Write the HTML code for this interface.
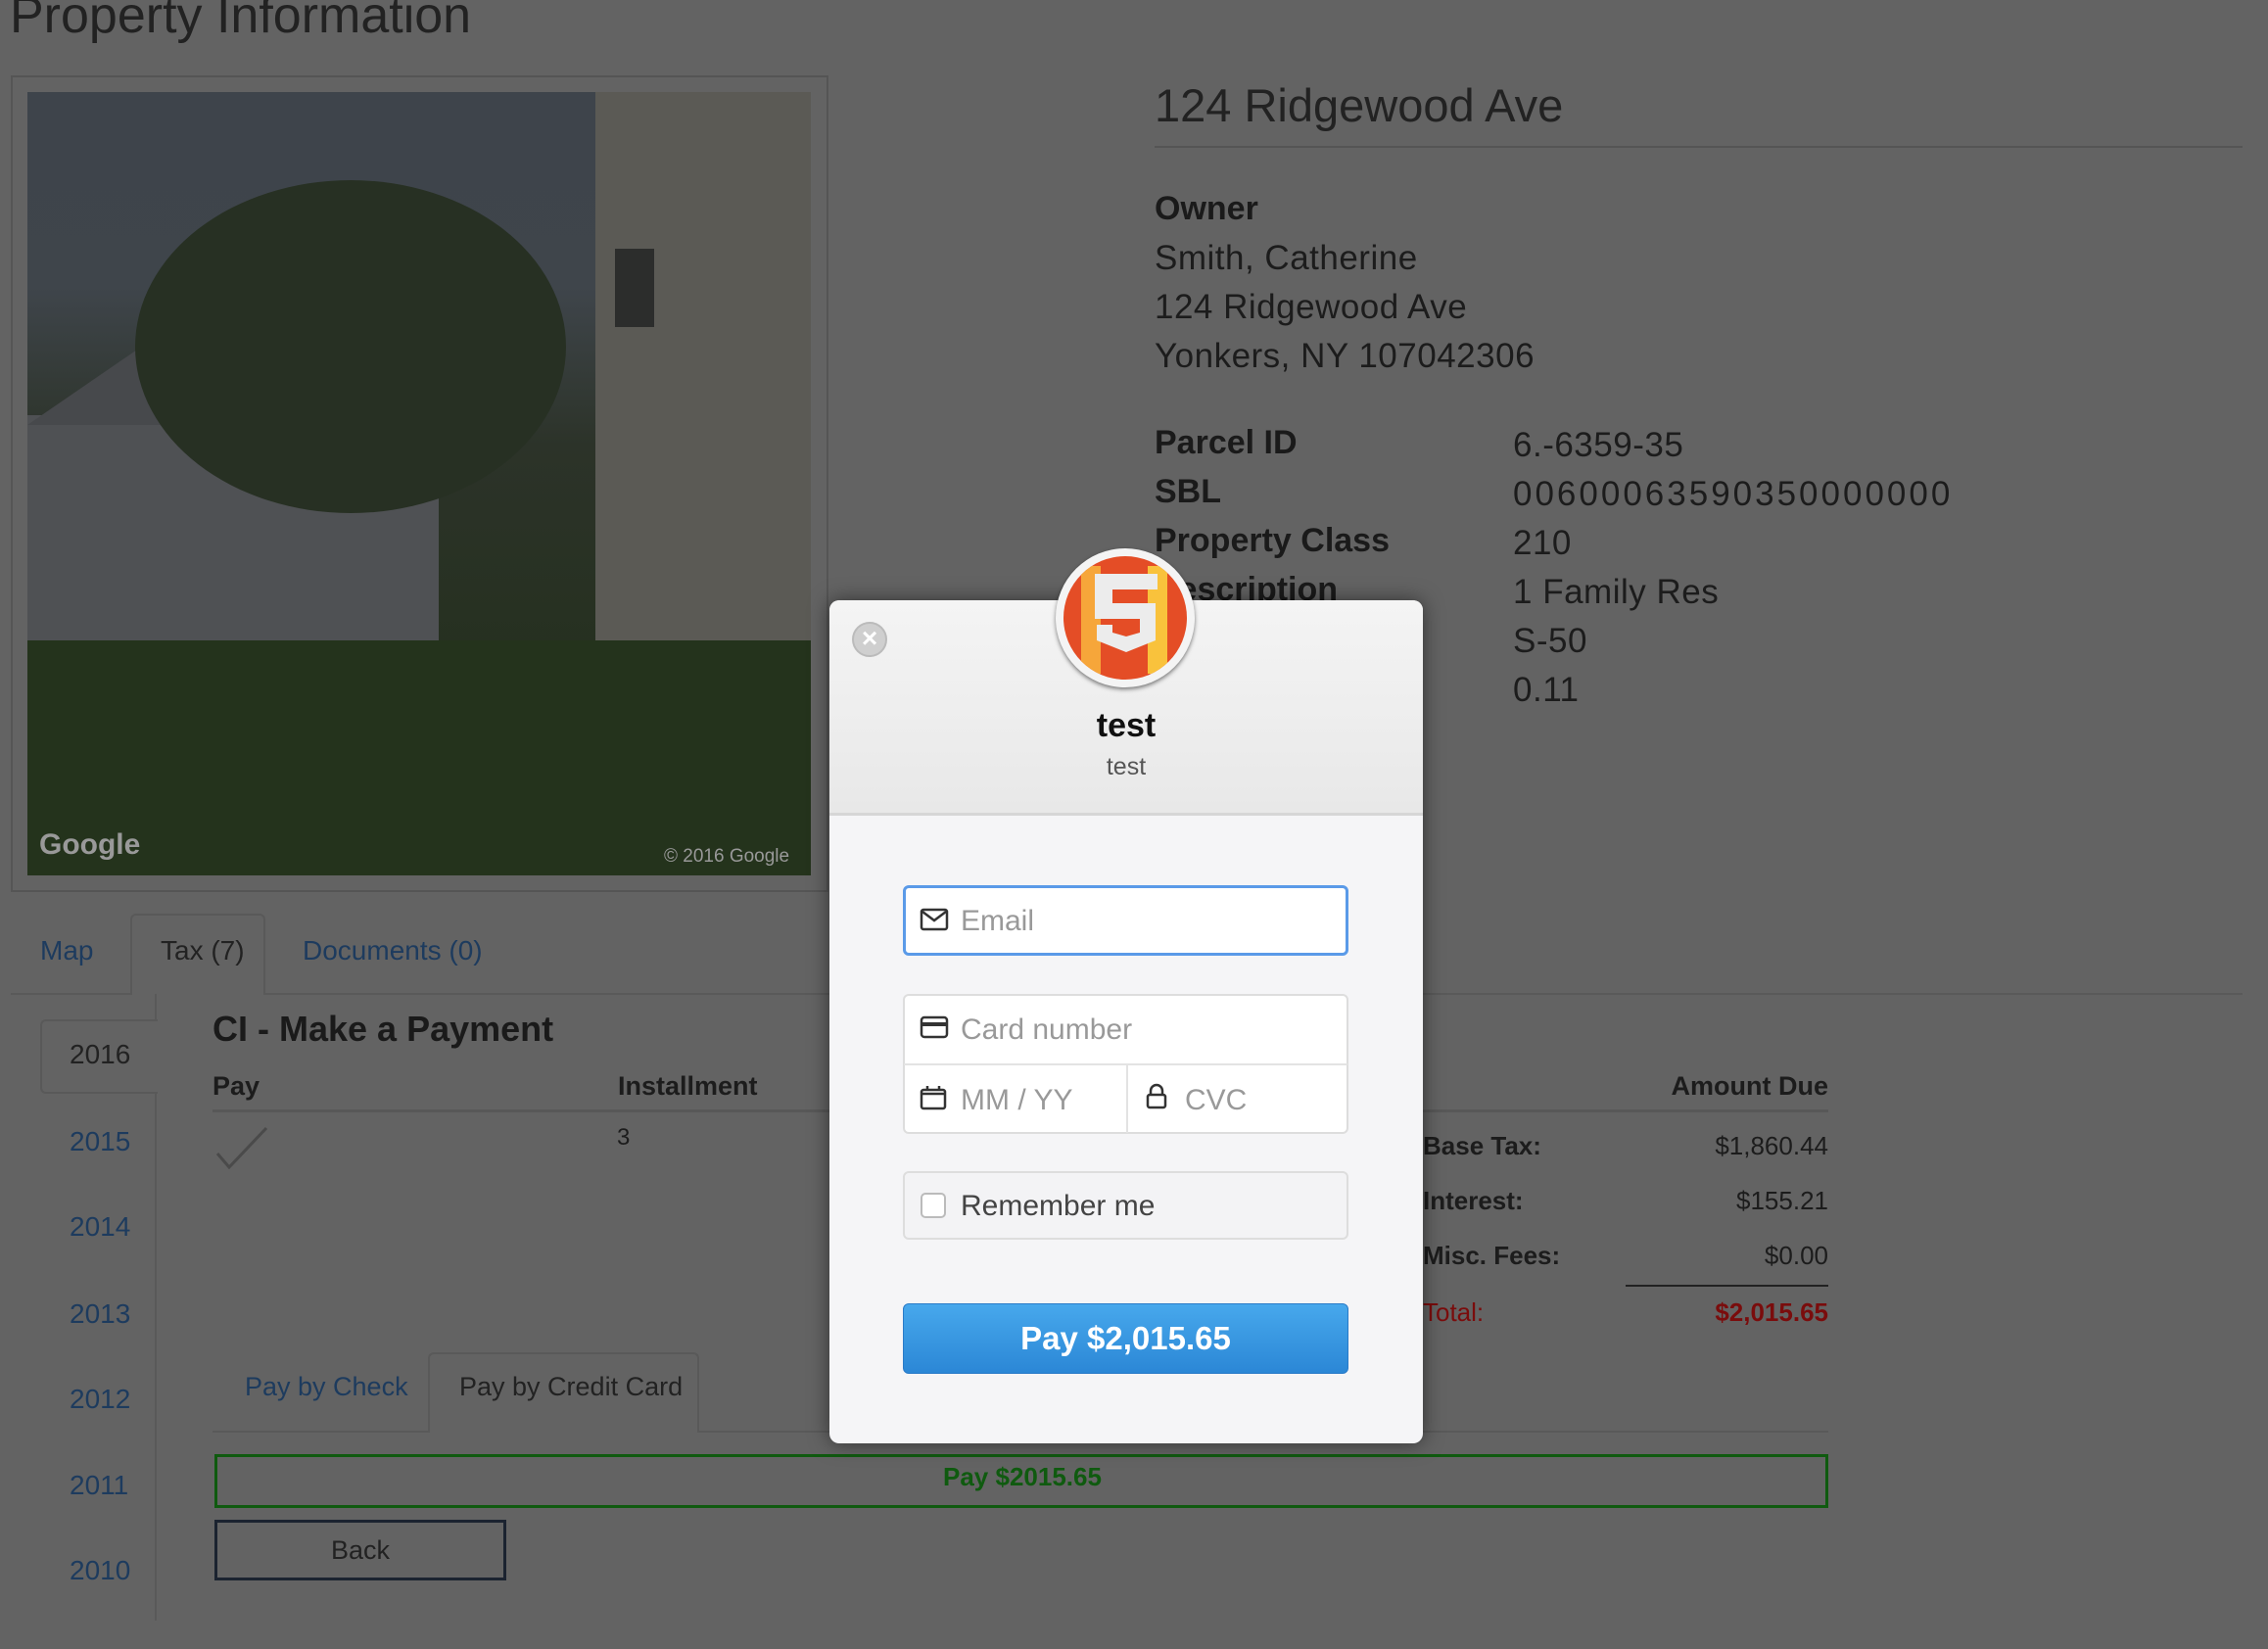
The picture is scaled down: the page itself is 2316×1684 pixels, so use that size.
<!DOCTYPE html>
<html><head><meta charset="utf-8"><style>
*{margin:0;padding:0;box-sizing:border-box}
body{width:2316px;height:1684px;background:#636363;font-family:"Liberation Sans",sans-serif;position:relative;overflow:hidden;color:#1c1c1c}
.a{position:absolute;white-space:nowrap}
.lbl{font-size:34px;font-weight:bold;color:#1a1a1a}
.val{font-size:35px;color:#1c1c1c;letter-spacing:0.5px}
.blue{color:#1d3b5e}
.yr{font-size:28px;color:#1d3b5e;left:71px}
</style></head><body>
<div class="a" style="left:10px;top:-14px;font-size:52px;color:#222">Property Information</div>
<div class="a" style="left:11px;top:77px;width:835px;height:834px;border:2px solid #555"></div>
<div class="a" style="left:28px;top:94px;width:800px;height:800px;overflow:hidden;background:linear-gradient(180deg,#3e444b 0%,#3f454b 25%,#2c3329 45%,#25301f 75%,#24311d 100%)">
 <div class="a" style="left:0;top:330px;width:420px;height:330px;background:#4f5154"></div>
 <div class="a" style="left:0;top:230px;width:400px;height:110px;background:#47494c;clip-path:polygon(0 100%,40% 0,100% 100%)"></div>
 <div class="a" style="left:110px;top:90px;width:440px;height:340px;border-radius:50%;background:#273023"></div>
 <div class="a" style="left:580px;top:0;width:220px;height:800px;background:#5b5a55"></div>
 <div class="a" style="left:600px;top:160px;width:40px;height:80px;background:#2c2d2c"></div>
 <div class="a" style="left:0;top:560px;width:800px;height:240px;background:#24331c"></div>
 <div class="a" style="left:12px;top:752px;font-size:30px;color:#999;font-weight:bold">Google</div>
 <div class="a" style="left:650px;top:770px;font-size:19px;color:#999">© 2016 Google</div>
</div>
<div class="a" style="left:1179px;top:80px;font-size:47px;color:#222">124 Ridgewood Ave</div>
<div class="a" style="left:1179px;top:149px;width:1111px;height:2px;background:#555"></div>
<div class="a lbl" style="left:1179px;top:194px">Owner</div>
<div class="a val" style="left:1179px;top:244px">Smith, Catherine</div>
<div class="a val" style="left:1179px;top:294px">124 Ridgewood Ave</div>
<div class="a val" style="left:1179px;top:344px">Yonkers, NY 107042306</div>
<div class="a lbl" style="left:1179px;top:433px">Parcel ID</div>
<div class="a lbl" style="left:1179px;top:483px">SBL</div>
<div class="a lbl" style="left:1179px;top:533px">Property Class</div>
<div class="a lbl" style="left:1179px;top:583px">Description</div>
<div class="a val" style="left:1545px;top:435px">6.-6359-35</div>
<div class="a val" style="left:1545px;top:485px;letter-spacing:3px">00600063590350000000</div>
<div class="a val" style="left:1545px;top:535px">210</div>
<div class="a val" style="left:1545px;top:585px">1 Family Res</div>
<div class="a val" style="left:1545px;top:635px">S-50</div>
<div class="a val" style="left:1545px;top:685px">0.11</div>

<div class="a" style="left:11px;top:1014px;width:2279px;height:2px;background:#595959"></div>
<div class="a" style="left:133px;top:933px;width:138px;height:83px;border:2px solid #595959;border-bottom:none;background:#636363;border-radius:6px 6px 0 0"></div>
<div class="a blue" style="left:41px;top:955px;font-size:28px">Map</div>
<div class="a" style="left:164px;top:955px;font-size:28px;color:#222">Tax (7)</div>
<div class="a blue" style="left:309px;top:955px;font-size:28px">Documents (0)</div>

<div class="a" style="left:158px;top:1015px;width:2px;height:640px;background:#595959"></div>
<div class="a" style="left:41px;top:1041px;width:120px;height:76px;border:2px solid #595959;border-right:none;background:#636363;border-radius:6px 0 0 6px"></div>
<div class="a" style="left:71px;top:1061px;font-size:28px;color:#222">2016</div>
<div class="a yr" style="top:1150px">2015</div>
<div class="a yr" style="top:1237px">2014</div>
<div class="a yr" style="top:1326px">2013</div>
<div class="a yr" style="top:1413px">2012</div>
<div class="a yr" style="top:1501px">2011</div>
<div class="a yr" style="top:1588px">2010</div>

<div class="a" style="left:217px;top:1030px;font-size:36px;font-weight:bold;color:#1a1a1a">CI - Make a Payment</div>
<div class="a" style="left:217px;top:1094px;font-size:27px;font-weight:bold">Pay</div>
<div class="a" style="left:631px;top:1094px;font-size:27px;font-weight:bold">Installment</div>
<div class="a" style="right:449px;top:1094px;font-size:27px;font-weight:bold">Amount Due</div>
<div class="a" style="left:217px;top:1133px;width:1650px;height:3px;background:#585858"></div>
<svg class="a" style="left:220px;top:1150px" width="56" height="44"><path d="M2 28 L14 42 L52 2" stroke="#4a4a4a" stroke-width="3" fill="none"/></svg>
<div class="a" style="left:630px;top:1148px;font-size:24px">3</div>
<div class="a" style="left:1453px;top:1155px;font-size:26px;font-weight:bold">Base Tax:</div>
<div class="a" style="left:1453px;top:1211px;font-size:26px;font-weight:bold">Interest:</div>
<div class="a" style="left:1453px;top:1267px;font-size:26px;font-weight:bold">Misc. Fees:</div>
<div class="a" style="left:1453px;top:1325px;font-size:26px;color:#7a0c0c">Total:</div>
<div class="a" style="right:449px;top:1155px;font-size:26px">$1,860.44</div>
<div class="a" style="right:449px;top:1211px;font-size:26px">$155.21</div>
<div class="a" style="right:449px;top:1267px;font-size:26px">$0.00</div>
<div class="a" style="right:449px;top:1325px;font-size:26px;color:#7a0c0c;font-weight:bold">$2,015.65</div>
<div class="a" style="left:1660px;top:1312px;width:207px;height:2px;background:#222"></div>

<div class="a" style="left:217px;top:1461px;width:1650px;height:2px;background:#595959"></div>
<div class="a" style="left:437px;top:1381px;width:277px;height:82px;border:2px solid #595959;border-bottom:none;background:#636363;border-radius:6px 6px 0 0"></div>
<div class="a blue" style="left:250px;top:1401px;font-size:27px">Pay by Check</div>
<div class="a" style="left:469px;top:1401px;font-size:27px;color:#222">Pay by Credit Card</div>
<div class="a" style="left:219px;top:1485px;width:1648px;height:55px;border:3px solid #0f5a0f"></div>
<div class="a" style="left:963px;top:1493px;font-size:26px;font-weight:bold;color:#0f5a0f">Pay $2015.65</div>
<div class="a" style="left:219px;top:1552px;width:298px;height:62px;border:3px solid #1b2330;text-align:center;line-height:56px;font-size:27px;color:#222">Back</div>

<!-- modal -->
<div class="a" style="left:847px;top:613px;width:606px;height:861px;border-radius:10px;background:#f5f5f7;overflow:hidden;box-shadow:0 0 20px rgba(0,0,0,.5)">
 <div style="height:220px;background:linear-gradient(#f4f4f4,#e8e8e8);border-bottom:3px solid #d6d6d6"></div>
</div>
<div class="a" style="left:870px;top:635px;width:36px;height:36px;border-radius:50%;background:#cfcfcf;border:2px solid #bbb;color:#fff;font-size:28px;line-height:30px;text-align:center;font-weight:bold">×</div>
<div class="a" style="left:1078px;top:560px;width:142px;height:142px;border-radius:50%;background:#f4f4f4;box-shadow:0 2px 4px rgba(0,0,0,.5)"></div>
<div class="a" style="left:1086px;top:568px;width:126px;height:126px;border-radius:50%;background:#e44d26;overflow:hidden">
 <div class="a" style="left:18px;top:10px;width:20px;height:110px;background:#f6a63a"></div>
 <div class="a" style="left:86px;top:10px;width:20px;height:110px;background:#f9c23c"></div>
 <svg class="a" style="left:28px;top:14px" width="72" height="90"><path d="M4 4 H68 V20 H22 V34 H66 V72 L36 84 L6 72 V56 H22 V64 L36 68 L50 64 V50 H4 Z" fill="#ececec"/></svg>
</div>
<div class="a" style="left:848px;top:722px;width:604px;text-align:center;font-size:34px;font-weight:bold;color:#111">test</div>
<div class="a" style="left:848px;top:769px;width:604px;text-align:center;font-size:25px;color:#555">test</div>

<div class="a" style="left:922px;top:904px;width:455px;height:72px;border:3px solid #5a9ae8;border-radius:6px;background:#fff"></div>
<svg class="a" style="left:939px;top:927px" width="30" height="24"><rect x="2" y="2" width="26" height="20" rx="2" fill="none" stroke="#333" stroke-width="2.5"/><path d="M3 4 L15 13 L27 4" fill="none" stroke="#333" stroke-width="2.5"/></svg>
<div class="a" style="left:981px;top:924px;font-size:30px;color:#999">Email</div>

<div class="a" style="left:922px;top:1015px;width:455px;height:143px;border:2px solid #ddd;border-radius:6px;background:#fff"></div>
<div class="a" style="left:923px;top:1086px;width:453px;height:2px;background:#e3e3e3"></div>
<div class="a" style="left:1150px;top:1087px;width:2px;height:70px;background:#e3e3e3"></div>
<svg class="a" style="left:939px;top:1037px" width="30" height="24"><rect x="2" y="2" width="26" height="20" rx="3" fill="none" stroke="#333" stroke-width="2.5"/><rect x="2" y="7" width="26" height="4" fill="#333"/></svg>
<div class="a" style="left:981px;top:1035px;font-size:30px;color:#999">Card number</div>
<svg class="a" style="left:939px;top:1108px" width="28" height="26"><rect x="2" y="5" width="24" height="19" rx="2" fill="none" stroke="#333" stroke-width="2.5"/><path d="M2 9 H26 M8 1 V6 M20 1 V6" stroke="#333" stroke-width="2.5"/></svg>
<div class="a" style="left:981px;top:1107px;font-size:30px;color:#999">MM / YY</div>
<svg class="a" style="left:1169px;top:1106px" width="24" height="28"><path d="M6 12 V8 a6 6 0 0 1 12 0 V12" fill="none" stroke="#333" stroke-width="2.5"/><rect x="3" y="12" width="18" height="13" rx="2" fill="none" stroke="#333" stroke-width="2.5"/></svg>
<div class="a" style="left:1210px;top:1107px;font-size:30px;color:#999">CVC</div>

<div class="a" style="left:922px;top:1196px;width:455px;height:70px;border:2px solid #ddd;border-radius:6px;background:#f3f3f5"></div>
<div class="a" style="left:940px;top:1218px;width:26px;height:26px;border:2px solid #bbb;border-radius:5px;background:#fff"></div>
<div class="a" style="left:981px;top:1215px;font-size:30px;color:#444">Remember me</div>

<div class="a" style="left:922px;top:1331px;width:455px;height:72px;border-radius:6px;background:linear-gradient(#47a8ec,#2b87d6);border:1px solid #2a7bc8;color:#fff;font-size:33px;font-weight:bold;text-align:center;line-height:70px">Pay $2,015.65</div>
</body></html>
